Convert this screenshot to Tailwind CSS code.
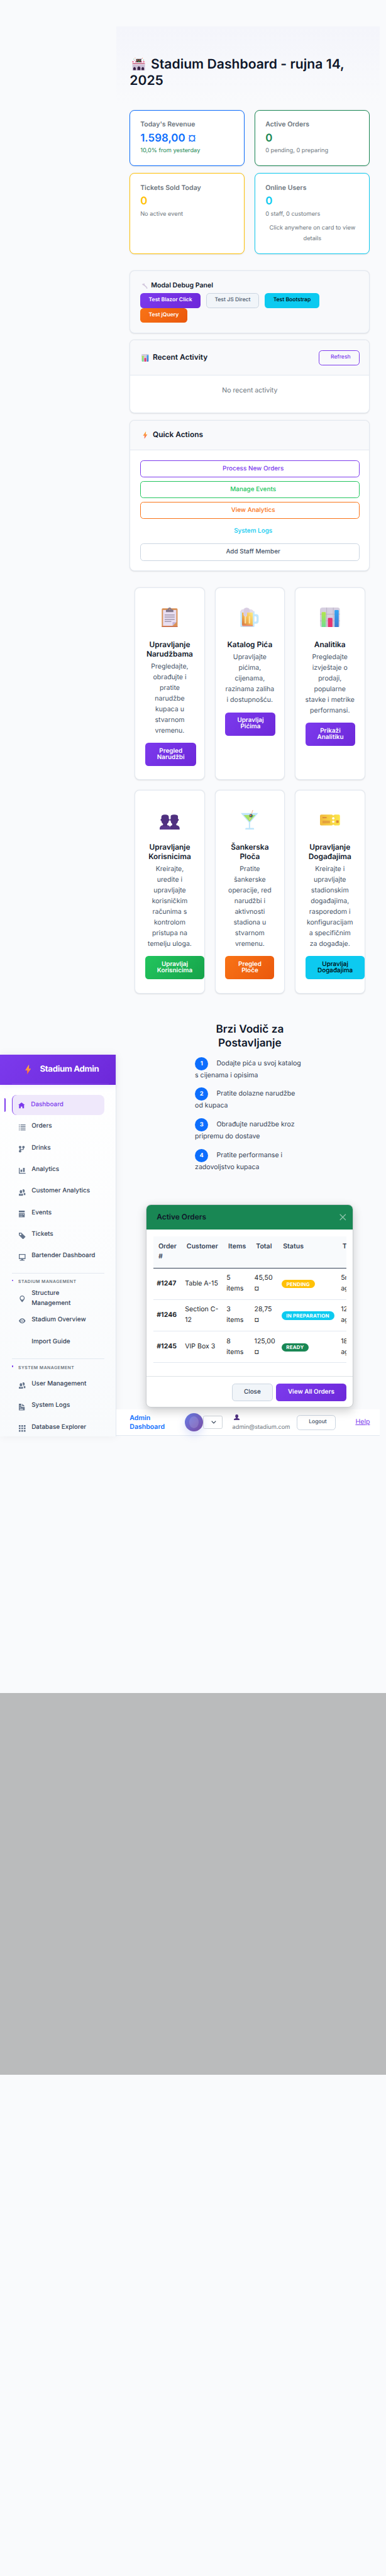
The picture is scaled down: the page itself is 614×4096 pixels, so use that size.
<!DOCTYPE html>
<html lang="hr">
<head>
<meta charset="utf-8">
<title>Stadium Dashboard</title>
<script src="https://cdn.jsdelivr.net/npm/@tailwindcss/browser@4"></script>
</head>
<body class="bg-[#f9fafc]">
<svg class="absolute w-0 h-0" aria-hidden="true">
  <defs>
    <linearGradient id="gBolt" x1="0" y1="0" x2="0" y2="1"><stop offset="0" stop-color="#fcb53b"/><stop offset=".55" stop-color="#fb8a45"/><stop offset="1" stop-color="#f4434f"/></linearGradient>
    <linearGradient id="gGreen" x1="0" y1="0" x2="0" y2="1"><stop offset="0" stop-color="#b3e64c"/><stop offset="1" stop-color="#6fdd95"/></linearGradient>
    <linearGradient id="gBlue" x1="0" y1="0" x2="0" y2="1"><stop offset="0" stop-color="#33a5f5"/><stop offset="1" stop-color="#3f7bd0"/></linearGradient>
    <linearGradient id="gBeer" x1="1" y1="0" x2="0" y2="1"><stop offset="0" stop-color="#fff08a"/><stop offset=".5" stop-color="#f6bd52"/><stop offset="1" stop-color="#d2733f"/></linearGradient>
    <linearGradient id="gTicket" x1="0" y1="0" x2="1" y2="0"><stop offset="0" stop-color="#f1b93d"/><stop offset="1" stop-color="#fce74a"/></linearGradient>
    <symbol id="bolt" viewBox="0 0 14 24"><path d="M8.6.3 0 13.6h4.9L4.3 23.7 14 9.6H8.9L9.4.5z" fill="url(#gBolt)"/></symbol>
    <symbol id="chart" viewBox="0 0 48 48"><rect width="48" height="48" rx="6" fill="#d6cfe0"/><path d="M16 0v48M32 0v48M0 16h48M0 32h48" stroke="#b9b2c4" stroke-width="1.5"/><rect x="4" y="11" width="10" height="37" rx="2" fill="url(#gGreen)"/><rect x="19" y="25" width="11" height="23" rx="2" fill="#e8336f"/><rect x="35" y="6" width="10" height="42" rx="2" fill="url(#gBlue)"/></symbol>
    <symbol id="people" viewBox="0 0 8 8"><path d="M5.5 0c-.51 0-.95.35-1.22.88.45.54.72 1.28.72 2.13 0 .29-.03.55-.09.81.19.11.38.19.59.19.83 0 1.5-.9 1.5-2s-.67-2-1.5-2zm-3 1c-.83 0-1.5.9-1.5 2s.67 2 1.5 2 1.5-.9 1.5-2-.67-2-1.5-2zm4.75 3.16c-.43.51-1.02.82-1.69.84.27.38.44.84.44 1.34v.66h2v-1.66c0-.52-.31-.97-.75-1.19zm-6.5 1c-.44.22-.75.67-.75 1.19v1.66h5v-1.66c0-.52-.31-.97-.75-1.19-.45.53-1.06.84-1.75.84s-1.3-.32-1.75-.84z"/></symbol>
  </defs>
</svg>
<div class="w-[614px] h-[4096px] overflow-hidden">
<div class="[zoom:0.6612] w-[929px] h-[6195px] bg-[#f9fafc] font-['Inter',sans-serif] text-base leading-[25.6px] text-[#334155] [text-rendering:geometricPrecision]">
  <div class="flex h-[4072px]">

    <!-- Sidebar -->
    <aside class="w-[280px] shrink-0 pt-[2537px]">
      <div class="h-[917px] border-r border-[#e2e8f0] bg-linear-to-b from-white to-[#f8fafc] shadow-[0_0_20px_rgba(15,23,42,0.06)]">
        <div class="relative z-10 h-[72px] bg-linear-135 from-[#7c3aed] to-[#6d28d9] flex flex-col justify-end pl-7 pr-[17px] pb-px shadow-[0_4px_12px_rgba(124,58,237,0.08)]">
          <div class="flex items-center h-[70px] pl-[33px] border-b border-white/10">
            <svg class="w-[14px] h-6"><use href="#bolt"/></svg>
            <span class="ml-[21px] text-[20px] font-bold text-white tracking-[-0.5px] whitespace-nowrap">Stadium Admin</span>
          </div>
        </div>
        <nav class="pt-6 pl-7 pr-7 flex flex-col gap-1 text-[15px] font-medium leading-6 text-[#334155]">
          <a class="relative flex items-center h-12 rounded-xl border-l-[3px] border-[#7c3aed] bg-[#efe8fb] pl-[15px] text-[#7c3aed]"><i class="absolute -left-[19px] top-[7px] w-[3px] h-[34px] rounded-r bg-[#7c3aed]"></i>
            <svg viewBox="0 0 8 8" class="w-4 h-4 mt-1.5 mr-[14px] fill-[#7c3aed]"><path d="M4 0l-4 3h1v4h2v-2h2v2h2v-4.03l1 .03-4-3z"/></svg>Dashboard</a>
          <a class="flex items-center h-12 pl-[18px]"><svg viewBox="0 0 8 8" class="w-4 h-4 mt-1.5 mr-[14px] fill-[#64748b]"><path d="M0 0v1h1v-1h-1zm2 0v1h6v-1h-6zm-2 2v1h1v-1h-1zm2 0v1h6v-1h-6zm-2 2v1h1v-1h-1zm2 0v1h6v-1h-6zm-2 2v1h1v-1h-1zm2 0v1h6v-1h-6z"/></svg>Orders</a>
          <a class="flex items-center h-12 pl-[18px]"><svg viewBox="0 0 8 8" class="w-4 h-4 mt-1.5 mr-[14px] fill-[#64748b]"><path d="M1.5 0c-.83 0-1.5.67-1.5 1.5 0 .66.41 1.2 1 1.41v2.19c-.59.2-1 .75-1 1.41 0 .83.67 1.5 1.5 1.5s1.5-.67 1.5-1.5c0-.6-.34-1.1-.84-1.34.09-.09.21-.16.34-.16h2c.82 0 1.5-.68 1.5-1.5v-.59c.59-.2 1-.75 1-1.41 0-.83-.67-1.5-1.5-1.5s-1.5.67-1.5 1.5c0 .66.41 1.2 1 1.41v.59c0 .28-.22.5-.5.5h-2c-.17 0-.35.04-.5.09v-1.19c.59-.2 1-.75 1-1.41 0-.83-.67-1.5-1.5-1.5z"/></svg>Drinks</a>
          <a class="flex items-center h-12 pl-[18px]"><svg viewBox="0 0 8 8" class="w-4 h-4 mt-1.5 mr-[14px] fill-[#64748b]"><path d="M0 0v7h8v-1h-7v-6h-1zm5 0v5h2v-5h-2zm-3 2v3h2v-3h-2z"/></svg>Analytics</a>
          <a class="flex items-center h-12 pl-[18px]"><svg class="w-4 h-4 mt-1.5 mr-[14px] fill-[#64748b]"><use href="#people"/></svg>Customer Analytics</a>
          <a class="flex items-center h-12 pl-[18px]"><svg viewBox="0 0 8 8" class="w-4 h-4 mt-1.5 mr-[14px] fill-[#64748b]"><path d="M0 0v2h7v-2h-7zm0 3v4.91c0 .05.04.09.09.09h6.81c.05 0 .09-.04.09-.09v-4.91h-7zm1 1h1v1h-1v-1zm2 0h1v1h-1v-1zm2 0h1v1h-1v-1zm-4 2h1v1h-1v-1zm2 0h1v1h-1v-1z"/></svg>Events</a>
          <a class="flex items-center h-12 pl-[18px]"><svg viewBox="0 0 8 8" class="w-4 h-4 mt-1.5 mr-[14px] fill-[#64748b]"><path d="M0 0v3l5 5 3-3-5-5h-3zm2 1c.55 0 1 .45 1 1s-.45 1-1 1-1-.45-1-1 .45-1 1-1z"/></svg>Tickets</a>
          <a class="flex items-center h-12 pl-[18px]"><svg viewBox="0 0 8 8" class="w-4 h-4 mt-1.5 mr-[14px] fill-[#64748b]"><path d="M0 0v6h3v1h-1c-.55 0-1 .45-1 1h6c0-.55-.45-1-1-1h-1v-1h3v-6zm1 1h6v4h-6z"/></svg>Bartender Dashboard</a>

          <div class="mt-3 h-[34px] border-t border-[#e2e8f0]">
            <div class="flex items-start pt-[10px]"><i class="mt-[5px] size-1 rounded-full bg-[#7c3aed]"></i><span class="ml-3 text-[10.4px] leading-5 font-semibold tracking-[0.7px] text-[#6c757d]">STADIUM MANAGEMENT</span></div>
          </div>
          <a class="flex items-center h-12 pl-[18px]"><svg viewBox="0 0 8 8" class="w-4 h-4 mt-0.5 mr-[14px] fill-[#64748b]"><path d="M4 0c-1.66 0-3 1.34-3 3 0 2 3 5 3 5s3-3 3-5c0-1.66-1.34-3-3-3zm0 1c1.11 0 2 .9 2 2 0 1.11-.89 2-2 2-1.1 0-2-.89-2-2 0-1.1.9-2 2-2z"/></svg><span>Structure<br>Management</span></a>
          <a class="flex items-center h-12 pl-[18px]"><svg viewBox="0 -1 8 8" class="w-4 h-4 mt-0.5 mr-[14px] fill-[#64748b]"><path d="M4.03 0c-2.53 0-4.03 3-4.03 3s1.5 3 4.03 3c2.47 0 3.97-3 3.97-3s-1.5-3-3.97-3zm-.03 1c1.11 0 2 .9 2 2 0 1.11-.89 2-2 2-1.1 0-2-.89-2-2 0-1.1.9-2 2-2zm0 1c-.55 0-1 .45-1 1s.45 1 1 1 1-.45 1-1c0-.1-.04-.19-.06-.28-.08.16-.24.28-.44.28-.28 0-.5-.22-.5-.5 0-.2.12-.36.28-.44-.09-.03-.18-.06-.28-.06z"/></svg>Stadium Overview</a>
          <a class="flex items-center h-12 pl-12">Import Guide</a>
          <div class="mt-3 h-[34px] border-t border-[#e2e8f0]">
            <div class="flex items-start pt-[10px]"><i class="mt-[5px] size-1 rounded-full bg-[#7c3aed]"></i><span class="ml-3 text-[10.4px] leading-5 font-semibold tracking-[0.7px] text-[#6c757d]">SYSTEM MANAGEMENT</span></div>
          </div>
          <a class="flex items-center h-12 pl-[18px]"><svg class="w-4 h-4 mt-1.5 mr-[14px] fill-[#64748b]"><use href="#people"/></svg>User Management</a>
          <a class="flex items-center h-12 pl-[18px]"><svg viewBox="0 0 8 8" class="w-4 h-4 mt-1.5 mr-[14px] fill-[#64748b]"><path d="M0 0v8h7v-4h-4v-4h-3zm4 0v3h3l-3-3zm-3 2h1v1h-1v-1zm0 2h1v1h-1v-1zm0 2h4v1h-4v-1z"/></svg>System Logs</a>
          <a class="flex items-center h-12 pl-[18px]"><svg viewBox="0 0 8 8" class="w-4 h-4 mt-1.5 mr-[14px] fill-[#64748b]"><path d="M0 0h2v2h-2zM3 0h2v2h-2zM6 0h2v2h-2zM0 3h2v2h-2zM3 3h2v2h-2zM6 3h2v2h-2zM0 6h2v2h-2zM3 6h2v2h-2zM6 6h2v2h-2z"/></svg>Database Explorer</a>
        </nav>
      </div>
    </aside>

    <!-- Main column -->
    <main class="w-[634px] shrink-0 pt-16">
      <header class="h-[184px] pt-[72px] px-8 bg-linear-to-b from-[#f4f5fb] to-[#f9fafc]">
        <h1 class="text-[32px] leading-10 font-semibold text-[#0f172a] whitespace-nowrap"><svg viewBox="0 0 32 32" class="inline-block w-8 h-8 ml-[5px] mr-[14px] -mt-1.5"><path d="M1 17 3 14h26l2 3v15H1z" fill="#cdbfd6"/><path d="M1 16h30v2H1z" fill="#e9dff0"/><path d="M1 14.500h30v1.500H1z" fill="#c93a56"/><path d="M1 9l4 2-4 2zM8 9l3 2-3 2zM21 9l4 2-4 2zM27 9l4 2-4 2z" fill="#e8336f"/><rect x="10" y="4" width="12" height="8" rx="1" fill="#4a3d3f"/><path d="M12 6h2v2h-2zM17 6h2v2h-2z" fill="#f97a35"/><path d="M15 9h3v2h-3z" fill="#3fae5a"/><path d="M3 4h2v1H3zM27 6h2v1h-2z" fill="#3fae5a"/><path d="M7 1h1v2H7zM24 2h2v1h-2z" fill="#f97a35"/><path d="M5 7h2v1H5zM22 3h1v2h-1z" fill="#4f3080"/><path d="M3 31v-5q3-5 6 0v5zM13 31v-6q3.500-6 7 0v6zM23 31v-5q3-5 6 0v5z" fill="#3b2347"/></svg>Stadium Dashboard - rujna 14,<br>2025</h1>
      </header>

      <!-- Stat cards -->
      <section class="mt-4 pl-8 pr-6 grid grid-cols-2 gap-x-6 gap-y-4">
        <div class="h-[136px] rounded-xl border border-[#0d6efd] bg-white px-6 pt-6 shadow-[0_1px_3px_rgba(0,0,0,0.1)]">
          <div class="leading-5 font-semibold text-[#6c757d]">Today's Revenue</div>
          <div class="mt-2 text-[25.6px] leading-8 font-semibold text-[#0d6efd]">1.598,00 ¤</div>
          <div class="mt-0.5 text-sm leading-6 text-[#198754]">10,0% from yesterday</div>
        </div>
        <div class="h-[136px] rounded-xl border border-[#198754] bg-white px-6 pt-6 shadow-[0_1px_3px_rgba(0,0,0,0.1)]">
          <div class="leading-5 font-semibold text-[#6c757d]">Active Orders</div>
          <div class="mt-2 text-[25.6px] leading-8 font-semibold text-[#198754]">0</div>
          <div class="mt-0.5 text-sm leading-6 text-[#6c757d]">0 pending, 0 preparing</div>
        </div>
        <div class="h-[195px] rounded-xl border border-[#ffc107] bg-white px-6 pt-6 shadow-[0_1px_3px_rgba(0,0,0,0.1)]">
          <div class="leading-5 font-semibold text-[#6c757d]">Tickets Sold Today</div>
          <div class="mt-2 text-[25.6px] leading-8 font-semibold text-[#ffc107]">0</div>
          <div class="mt-0.5 text-sm leading-6 text-[#6c757d]">No active event</div>
        </div>
        <div class="h-[195px] rounded-xl border border-[#0dcaf0] bg-white px-6 pt-6 shadow-[0_1px_3px_rgba(0,0,0,0.1)]">
          <div class="leading-5 font-semibold text-[#6c757d]">Online Users</div>
          <div class="mt-2 text-[25.6px] leading-8 font-semibold text-[#0dcaf0]">0</div>
          <div class="mt-0.5 text-sm leading-6 text-[#6c757d]">0 staff, 0 customers</div>
          <div class="mt-2.5 text-sm leading-[25.6px] text-center text-[#6c757d]">Click anywhere on card to view<br>details</div>
        </div>
      </section>

      <section class="mt-10 pl-8 pr-6 flex flex-col gap-4">
        <!-- Debug panel -->
        <div class="h-[150px] rounded-xl border border-[#e2e8f0] bg-[#f8f9fb] px-6 pt-[26px] shadow-[0_1px_3px_rgba(0,0,0,0.1)]">
          <div class="flex items-center h-[19px] font-semibold text-[#0f172a]"><svg viewBox="0 0 14 14" class="size-[14px] ml-1 mr-2"><path d="M3.500 3.500 11.500 11" stroke="#cfc3da" stroke-width="2.400"/><path d="M.5 1.500 2.500 3 4 1 3.500.2A3 3 0 0 1 5.500 4.500 3 3 0 0 1 .5 1.500zM13.500 12 11.500 10.500 10 12.500l.8 1A3 3 0 0 0 13.500 12z" fill="#cfc3da"/></svg>Modal Debug Panel</div>
          <div class="mt-[7px] flex flex-wrap gap-x-[13px] text-[13px] font-semibold text-white [&>*]:h-9 [&>*]:flex [&>*]:items-center [&>*]:justify-center [&>*]:rounded-lg">
            <span class="w-[145px] bg-linear-135 from-[#7c3aed] to-[#6d28d9]">Test Blazor Click</span>
            <span class="w-[128px] border border-[#cbd5e1] bg-[#f1f5f9] font-medium text-[#475569]">Test JS Direct</span>
            <span class="w-[132px] bg-[#0dcaf0] font-medium text-black">Test Bootstrap</span>
            <span class="w-[113px] bg-linear-135 from-[#f97316] to-[#ea580c]">Test jQuery</span>
          </div>
        </div>

        <!-- Recent activity -->
        <div class="h-[177px] rounded-xl border border-[#e2e8f0] bg-white overflow-hidden shadow-[0_1px_3px_rgba(0,0,0,0.1)]">
          <div class="flex items-center h-[85px] border-b border-[#e2e8f0] bg-[#f8f9fb] px-6">
            <svg class="size-[18px] ml-[3px] mr-[9px]"><use href="#chart"/></svg>
            <span class="text-lg font-semibold text-[#0f172a]">Recent Activity</span>
            <span class="ml-auto w-[98px] h-9 pl-2 flex items-center justify-center rounded-lg border border-[#7c3aed] text-[13px] font-medium text-[#7c3aed]">Refresh</span>
          </div>
          <p class="pt-[23px] text-center text-[#6c757d]">No recent activity</p>
        </div>

        <!-- Quick actions -->
        <div class="h-[363px] rounded-xl border border-[#e2e8f0] bg-white overflow-hidden shadow-[0_1px_3px_rgba(0,0,0,0.1)]">
          <div class="flex items-center h-[71px] border-b border-[#e2e8f0] bg-[#f8f9fb] px-6">
            <svg class="w-[12px] h-[18px] ml-[6px] mr-[12px]"><use href="#bolt"/></svg>
            <span class="text-lg font-semibold text-[#0f172a]">Quick Actions</span>
          </div>
          <div class="px-6 pt-6 flex flex-col gap-2 text-[15px] font-medium [&>*]:h-[42px] [&>*]:pl-4 [&>*]:flex [&>*]:items-center [&>*]:justify-center [&>*]:rounded-lg [&>*]:border">
            <span class="border-[#7c3aed] text-[#7c3aed]">Process New Orders</span>
            <span class="border-[#22c55e] text-[#22c55e]">Manage Events</span>
            <span class="border-[#f97316] text-[#f97316]">View Analytics</span>
            <span class="border-transparent text-[#0dcaf0]">System Logs</span>
            <span class="border-[#cbd5e1] text-[#475569]">Add Staff Member</span>
          </div>
        </div>
      </section>

      <!-- Feature cards -->
      <section class="mt-10 pl-11 pr-9 grid grid-cols-3 gap-6 text-center text-[#475569]">
        <article class="h-[463px] rounded-xl border border-[#e2e8f0] bg-white px-6 pt-[46px] shadow-[0_1px_3px_rgba(0,0,0,0.1)]">
          <svg viewBox="0 0 48 48" class="block size-12 mx-auto"><rect x="5" y="2" width="38" height="46" rx="2.500" fill="#db9257"/><path d="M5 45h38v1a2 2 0 0 1-2 2H7a2 2 0 0 1-2-2z" fill="#c4674f"/><path d="M8 6h32v29l-9 9H8z" fill="#e8def2"/><path d="M40 35h-9v9z" fill="#c3b2d6"/><path d="M15 11V7q0-3 5-3a4 4 0 0 1 8 0q5 0 5 3v4z" fill="#83788c"/><circle cx="24" cy="4" r="1.500" fill="#db9257"/><path d="M12 18h24M12 23h24M12 28.500h24M12 33.500h16" stroke="#94899e" stroke-width="1.800"/></svg>
          <h3 class="mt-[31px] text-lg leading-[22.5px] font-semibold text-[#0f172a]">Upravljanje<br>Narudžbama</h3>
          <p class="mt-[7px] -mx-4">Pregledajte,<br>obrađujte i<br>pratite<br>narudžbe<br>kupaca u<br>stvarnom<br>vremenu.</p>
          <span class="mt-4 w-[123px] h-14 flex items-center justify-center rounded-lg bg-linear-135 from-[#7c3aed] to-[#6d28d9] text-[15px] leading-[15px] font-semibold text-white">Pregled<br>Narudžbi</span>
        </article>
        <article class="h-[463px] rounded-xl border border-[#e2e8f0] bg-white px-6 pt-[46px] shadow-[0_1px_3px_rgba(0,0,0,0.1)]">
          <svg viewBox="0 0 48 48" class="block size-12 mx-auto"><path d="M34 16h6q6 0 6 6v10q0 7-6 7h-6v-5h4q3 0 3-3v-7q0-3-3-3h-4z" fill="#c3e8fd"/><path d="M2 9h34v35a4 4 0 0 1-4 4H6a4 4 0 0 1-4-4z" fill="#c3e8fd"/><path d="M6 10h26v33H8q-2 0-2-3z" fill="url(#gBeer)"/><path d="M6 42h26v3H8q-2 0-2-3z" fill="#e98a74"/><path d="M14 22v15M24 22v15" stroke="#fbe0a0" stroke-width="3.500" stroke-linecap="round"/><path d="M2 12q0-8 7-8 3-4 8-4t8 4q8 0 10 8H18v6q0 4-3.500 4T10 18v-6z" fill="#e4dcea"/><path d="M10 10q0-9 7-9t8 8l-1 3h-6v6q0 3-3.500 3T10 18z" fill="#d8cce2"/></svg>
          <h3 class="mt-[31px] text-lg leading-[22.5px] font-semibold text-[#0f172a] whitespace-nowrap">Katalog Pića</h3>
          <p class="mt-[7px] -mx-4">Upravljajte<br>pićima,<br>cijenama,<br>razinama zaliha<br>i dostupnošću.</p>
          <span class="mt-4 w-[121px] h-14 flex items-center justify-center rounded-lg bg-linear-135 from-[#7c3aed] to-[#6d28d9] text-[15px] leading-[15px] font-semibold text-white">Upravljaj<br>Pićima</span>
        </article>
        <article class="h-[463px] rounded-xl border border-[#e2e8f0] bg-white px-6 pt-[46px] shadow-[0_1px_3px_rgba(0,0,0,0.1)]">
          <svg class="block size-12 mx-auto"><use href="#chart"/></svg>
          <h3 class="mt-[31px] text-lg leading-[22.5px] font-semibold text-[#0f172a]">Analitika</h3>
          <p class="mt-[7px] -mx-4">Pregledajte<br>izvještaje o<br>prodaji,<br>popularne<br>stavke i metrike<br>performansi.</p>
          <span class="mt-4 w-[120px] h-14 flex items-center justify-center rounded-lg bg-linear-135 from-[#7c3aed] to-[#6d28d9] text-[15px] leading-[15px] font-semibold text-white">Prikaži<br>Analitiku</span>
        </article>

        <article class="h-[489px] rounded-xl border border-[#e2e8f0] bg-white px-6 pt-[46px] shadow-[0_1px_3px_rgba(0,0,0,0.1)]">
          <svg viewBox="0 0 48 48" class="block size-12 mx-auto fill-[#4f3080]"><path d="M25 48V40q2-4 9-4 14 0 14 8v4z"/><path d="M26.500 15q0-4 8.500-4t9 4v6q2 0 2 2.500t-2 2.500q-1 8-9 8t-8.500-8q-2 0-2-2.500t2-2.500z"/><path d="M0 48v-4q0-8 13-8t13 8v4z" class="fill-[#5b3a8e]"/><path d="M4 17q0-6 9-6t9 6v4q2 0 2 2.500T22 26q-1 8-9 8t-9-8q-2 0-2-2.500T4 21z"/><path d="M8 31h10v8H8zM30 31h10v8H30z"/></svg>
          <h3 class="mt-[31px] text-lg leading-[22.5px] font-semibold text-[#0f172a]">Upravljanje<br>Korisnicima</h3>
          <p class="mt-[7px] -mx-4">Kreirajte,<br>uredite i<br>upravljajte<br>korisničkim<br>računima s<br>kontrolom<br>pristupa na<br>temelju uloga.</p>
          <span class="mt-4 w-[142px] h-14 flex items-center justify-center rounded-lg bg-linear-135 from-[#22c55e] to-[#16a34a] text-[15px] leading-[15px] font-semibold text-white">Upravljaj<br>Korisnicima</span>
        </article>
        <article class="h-[489px] rounded-xl border border-[#e2e8f0] bg-white px-6 pt-[46px] shadow-[0_1px_3px_rgba(0,0,0,0.1)]">
          <svg viewBox="0 0 48 48" class="block size-12 mx-auto"><path d="M3 7h42L25.500 30v14h-3V30z" fill="#bfe5fb"/><path d="M10 12h28L24 28z" fill="#a8e267"/><rect x="14" y="43" width="21" height="5" rx="2" fill="#bfe5fb"/><path d="M32 0 24 24" stroke="#f9c6a4" stroke-width="1.800"/><circle cx="27.500" cy="13.500" r="4" fill="#31716b"/><circle cx="26.500" cy="13" r="2.200" fill="#f4694c"/></svg>
          <h3 class="mt-[31px] text-lg leading-[22.5px] font-semibold text-[#0f172a]">Šankerska<br>Ploča</h3>
          <p class="mt-[7px] -mx-4">Pratite<br>šankerske<br>operacije, red<br>narudžbi i<br>aktivnosti<br>stadiona u<br>stvarnom<br>vremenu.</p>
          <span class="mt-4 w-[118px] h-14 flex items-center justify-center rounded-lg bg-linear-135 from-[#f97316] to-[#ea580c] text-[15px] leading-[15px] font-semibold text-white">Pregled<br>Ploče</span>
        </article>
        <article class="h-[489px] rounded-xl border border-[#e2e8f0] bg-white px-6 pt-[46px] shadow-[0_1px_3px_rgba(0,0,0,0.1)]">
          <svg viewBox="0 0 48 48" class="block size-12 mx-auto"><path d="M3 11h26q3 4 6 0h10a3 3 0 0 1 3 3v20a3 3 0 0 1-3 3H35q-3-4-6 0H3a3 3 0 0 1-3-3V14a3 3 0 0 1 3-3z" fill="url(#gTicket)"/><circle cx="32" cy="20" r="2.800" fill="#fff"/><circle cx="32" cy="28" r="2.800" fill="#fff"/><path d="M6 17h10v2.500H6zM6 26h18v2H6zM6 29.500h18v2H6zM39 25h6v6h-6z" fill="#d9893c"/></svg>
          <h3 class="mt-[31px] text-lg leading-[22.5px] font-semibold text-[#0f172a]">Upravljanje<br>Događajima</h3>
          <p class="mt-[7px] -mx-4">Kreirajte i<br>upravljajte<br>stadionskim<br>događajima,<br>rasporedom i<br>konfiguracijam<br>a specifičnim<br>za događaje.</p>
          <span class="mt-4 w-[143px] h-14 flex items-center justify-center rounded-lg bg-[#0dcaf0] text-[15px] leading-[15px] font-medium text-black">Upravljaj<br>Događajima</span>
        </article>
      </section>

      <!-- Setup guide -->
      <section class="mt-[71px] h-[436px]">
        <h2 class="pl-8 pr-6 text-center text-[26px] leading-[32.5px] font-semibold text-[#0f172a]">Brzi Vodič za<br>Postavljanje</h2>
        <ol class="mt-[17px] ml-[189px] flex flex-col gap-4">
          <li><div class="flex items-center"><b class="mr-5 size-8 rounded-full bg-[#0d6efd] flex items-center justify-center text-sm text-white">1</b>Dodajte pića u svoj katalog</div>s cijenama i opisima</li>
          <li><div class="flex items-center"><b class="mr-5 size-8 rounded-full bg-[#0d6efd] flex items-center justify-center text-sm text-white">2</b>Pratite dolazne narudžbe</div>od kupaca</li>
          <li><div class="flex items-center"><b class="mr-5 size-8 rounded-full bg-[#0d6efd] flex items-center justify-center text-sm text-white">3</b>Obrađujte narudžbe kroz</div>pripremu do dostave</li>
          <li><div class="flex items-center"><b class="mr-5 size-8 rounded-full bg-[#0d6efd] flex items-center justify-center text-sm text-white">4</b>Pratite performanse i</div>zadovoljstvo kupaca</li>
        </ol>
      </section>

      <!-- Active orders dialog -->
      <section class="relative z-10 ml-[71.5px] w-[499px] h-[489px] rounded-xl border border-[#c9cccf] bg-white overflow-hidden shadow-[0_8px_22px_rgba(0,0,0,0.19)]">
        <div class="h-[59px] pl-6 pr-4 flex items-center justify-between bg-[#198754]">
          <h4 class="text-lg font-semibold text-[#0f172a]">Active Orders</h4>
          <svg viewBox="0 0 16 16" class="size-4 stroke-white/50 stroke-2"><path d="m1 1 14 14M15 1 1 15"/></svg>
        </div>
        <div class="mx-4 mt-[17.5px] h-[305px] overflow-hidden">
          <div class="w-[560px] text-[#212529]">
            <div class="grid grid-cols-[68px_100px_67px_65px_143px_100px] h-[76px] pt-[11px] pl-3 border-b border-[#334155] bg-[#f8fafc] font-semibold text-[#334155]">
              <span>Order<br>#</span><span>Customer</span><span>Items</span><span>Total</span><span>Status</span><span>Time</span>
            </div>
            <div class="grid grid-cols-[68px_100px_67px_65px_143px_100px] h-[76px] pl-2 items-center border-b border-[#e2e8f0]">
              <b class="font-bold">#1247</b><span>Table A-15</span><span>5<br>items</span><span>45,50<br>¤</span><span class="mt-0.5 w-[81px] h-5 rounded-full bg-[#ffc107] flex items-center justify-center text-xs font-bold tracking-[0.3px] text-white">PENDING</span><span>5m<br>ago</span>
            </div>
            <div class="grid grid-cols-[68px_100px_67px_65px_143px_100px] h-[76px] pl-2 items-center border-b border-[#e2e8f0]">
              <b class="font-bold">#1246</b><span>Section C-<br>12</span><span>3<br>items</span><span>28,75<br>¤</span><span class="mt-0.5 w-[127px] h-5 rounded-full bg-[#0dcaf0] flex items-center justify-center text-xs font-bold tracking-[0.3px] text-white">IN PREPARATION</span><span>12m<br>ago</span>
            </div>
            <div class="grid grid-cols-[68px_100px_67px_65px_143px_100px] h-[76px] pl-2 items-center border-b border-[#e2e8f0]">
              <b class="font-bold">#1245</b><span>VIP Box 3</span><span>8<br>items</span><span>125,00<br>¤</span><span class="mt-0.5 w-[66px] h-5 rounded-full bg-[#198754] flex items-center justify-center text-xs font-bold tracking-[0.3px] text-white">READY</span><span>18m<br>ago</span>
            </div>
          </div>
        </div>
        <div class="mt-[31px] h-[75px] border-t border-[#dee2e6] flex items-center justify-end gap-2 pr-4 text-[15px]">
          <span class="w-[98px] h-[42px] rounded-lg border border-[#cbd5e1] bg-[#f1f5f9] flex items-center justify-center font-medium text-[#334155]">Close</span>
          <span class="w-[169px] h-[42px] rounded-lg bg-linear-135 from-[#7c3aed] to-[#6d28d9] flex items-center justify-center font-semibold text-white">View All Orders</span>
        </div>
      </section>

      <!-- Top bar -->
      <div class="mt-[4.5px] h-[64px] flex items-center bg-white border-b border-[#e2e8f0] pl-8 pr-6">
        <span class="w-[133px] text-base leading-5 font-semibold text-[#0d6efd]">Admin<br>Dashboard</span>
        <span class="size-11 rounded-full bg-linear-135 from-[#667eea] to-[#764ba2] flex items-center justify-center shadow-[0_8px_20px_rgba(102,126,234,0.25)]"><i class="w-[23px] h-7 rounded-[50%] bg-white/15"></i></span>
        <span class="w-[46px] h-[31px] pl-1 rounded border border-[#ced4da] flex items-center justify-center"><svg viewBox="0 0 12 8" class="w-3 h-2 fill-none stroke-[#334155] stroke-[1.8]"><path d="m1 1 5 5 5-5"/></svg></span>
        <span class="mt-1 ml-6 w-[155px] text-[14px] leading-[25px] text-[#6c757d]"><svg viewBox="0 0 14 14" class="block w-[14px] h-[14px] ml-[3px] mt-[3px] mb-[6px] fill-[#4f3080]"><path d="M0 14v-2q0-2 5-3V8Q3.800 7 3.700 5.500q-1-.5-.2-1.500V3q0-3 3.500-3t3.500 3v1q.8 1-.2 1.500Q10.200 7 9 8v1q5 1 5 3v2z"/></svg>admin@stadium.com</span>
        <span class="w-[93px] h-9 pl-2 rounded-lg border border-[#cbd5e1] flex items-center justify-center text-[13px] font-medium text-[#475569]">Logout</span>
        <span class="ml-auto text-[#7c3aed] underline">Help</span>
      </div>
    </main>
  </div>

  <!-- Dialog backdrop -->
  <div class="h-[917px] bg-[#babbbc]"></div>
</div>
</div>
</body>
</html>
